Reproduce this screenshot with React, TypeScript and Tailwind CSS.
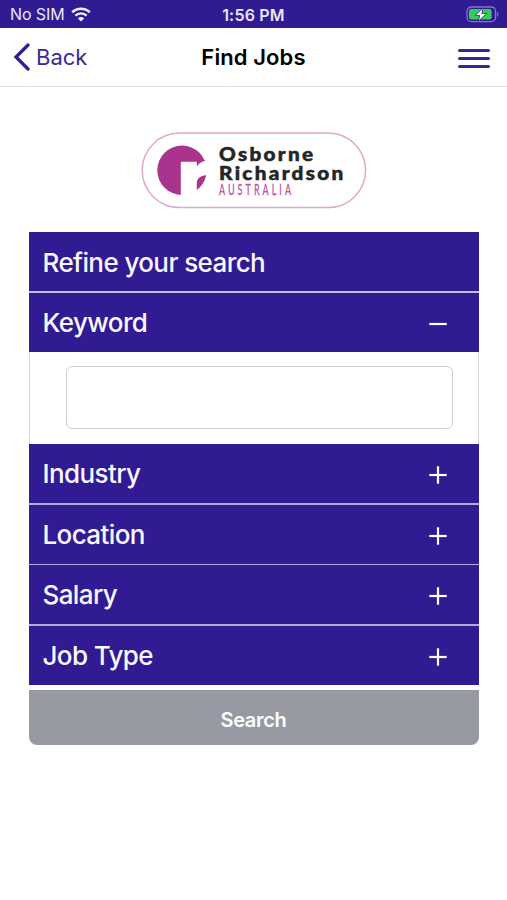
import React, { useState } from "react";

type TFilter = {
  id: string;
  label: string;
};

const filters: TFilter[] = [
  { id: "industry", label: "Industry" },
  { id: "location", label: "Location" },
  { id: "salary", label: "Salary" },
  { id: "jobType", label: "Job Type" },
];

function WifiIcon() {
  return (
    <svg width="20" height="15" viewBox="0 0 20 15" fill="none">
      <path d="M1.2 5.3a12.6 12.6 0 0 1 17.6 0" stroke="#f1effb" strokeWidth="2.6" />
      <path d="M4.4 8.7a8 8 0 0 1 11.2 0" stroke="#f1effb" strokeWidth="2.4" />
      <path d="M10 14.6 6.9 11.4a4.5 4.5 0 0 1 6.2 0z" fill="#f1effb" />
    </svg>
  );
}

function BatteryIcon() {
  return (
    <svg width="33" height="17" viewBox="0 0 33 17" fill="none">
      <rect x="1" y="1" width="28.6" height="14.6" rx="4.4" stroke="#8578c4" strokeWidth="1.3" />
      <path d="M31.2 6c1.6.6 1.6 4 0 4.6z" fill="#8578c4" />
      <rect x="3" y="3" width="22.6" height="10.6" rx="2.4" fill="#35cb5b" />
      <path
        d="M17.4 1.6 9.2 9.4h4.6l-1.6 6 8.4-8h-4.8z"
        fill="#fff"
        stroke="#2f1b92"
        strokeWidth=".8"
      />
    </svg>
  );
}

function Logo() {
  return (
    <svg width="226" height="78" viewBox="0 0 226 78" fill="none">
      <rect x="1.2" y="2" width="223.4" height="74.6" rx="37.3" stroke="#dfa9cd" strokeWidth="1.5" />
      <circle cx="41" cy="39.3" r="24.7" fill="#a9338d" />
      <path
        d="M39.8 30.7H55.8V35.5C58 32 62 30 67 29.6H70V44.3H65C59.5 44.6 56 47.5 55.8 52V66H39.8Z"
        fill="#fff"
      />
      <g
        fontFamily="Lato, sans-serif"
        fontWeight="900"
        fontSize="18.5"
        fill="#252525"
        stroke="#252525"
        strokeWidth=".5"
      >
        <text transform="translate(78 29.7) scale(1.12 1)" textLength="84">
          Osborne
        </text>
        <text transform="translate(78 48.6) scale(1.12 1)" textLength="111">
          Richardson
        </text>
      </g>
      <text
        transform="translate(78 64.2) scale(.6 1)"
        textLength="120"
        fontFamily="Lato, sans-serif"
        fontSize="15"
        fill="#c04fa8"
        stroke="#c04fa8"
        strokeWidth=".3"
      >
        AUSTRALIA
      </text>
    </svg>
  );
}

function ToggleIcon({ open }: { open: boolean }) {
  return (
    <svg
      className="mt-[3px]"
      width="18"
      height="18"
      viewBox="0 0 18 18"
      stroke="#fff"
      strokeWidth="2.2"
    >
      <path d="M0.3 9h17.4" />
      {!open && <path d="M9 0.3v17.4" />}
    </svg>
  );
}

type TFilterRowProps = {
  label: string;
  open: boolean;
  onToggle: () => void;
};

function FilterRow({ label, open, onToggle }: TFilterRowProps) {
  return (
    <button
      className="flex h-[59px] w-full items-center justify-between bg-[#301b92] pr-8 pl-3.5 text-left text-[26px] font-medium tracking-[-0.6px] text-[#f8f7fd]"
      aria-expanded={open}
      onClick={onToggle}
    >
      <span>{label}</span>
      <ToggleIcon open={open} />
    </button>
  );
}

export default function App() {
  const [keywordOpen, setKeywordOpen] = useState<boolean>(true);
  const [keyword, setKeyword] = useState<string>("");
  const [selected, setSelected] = useState<string | null>(null);

  return (
    <div className="min-h-screen bg-white font-[Inter,sans-serif]">
      {/* status bar */}
      <div className="grid h-7 grid-cols-3 items-center bg-[#301b92] px-2 text-[#e9e6f7]">
        <div className="flex items-center gap-1.5 pl-0.5 text-base tracking-[-0.1px]">
          <span>No SIM</span>
          <WifiIcon />
        </div>
        <span className="pt-0.5 text-center text-base font-semibold tracking-[0.2px]">1:56 PM</span>
        <div className="flex justify-end">
          <BatteryIcon />
        </div>
      </div>

      {/* navigation */}
      <header className="grid h-[59px] grid-cols-3 items-center border-b border-[#e2e2e4] pr-4 pl-3">
        <button className="flex items-center gap-1.5 text-[22px] text-[#3a2899]">
          <svg width="18" height="28" viewBox="0 0 18 28" fill="none">
            <path d="M16 2 4 14l12 12" stroke="#301b92" strokeWidth="3.2" strokeLinecap="round" />
          </svg>
          <span>Back</span>
        </button>
        <h1 className="pl-1 text-center text-[22px] font-semibold tracking-[0.1px] whitespace-nowrap text-black">
          Find Jobs
        </h1>
        <button className="flex flex-col items-end gap-[5px] pt-0.5 pr-px" aria-label="menu">
          <span className="h-[3px] w-8 rounded-full bg-[#3a2796]" />
          <span className="h-[3px] w-8 rounded-full bg-[#3a2796]" />
          <span className="h-[3px] w-8 rounded-full bg-[#3a2796]" />
        </button>
      </header>

      <main className="flex flex-col items-center pt-11">
        <Logo />

        <section className="mt-[23px] w-[450px]">
          <div className="flex flex-col gap-[2px] bg-[#c4bde6]">
            <h2 className="flex h-[59px] items-center bg-[#301b92] pt-px pl-3.5 text-[26px] font-medium tracking-[-0.6px] text-[#f8f7fd]">
              Refine your search
            </h2>
            <FilterRow
              label="Keyword"
              open={keywordOpen}
              onToggle={() => setKeywordOpen(!keywordOpen)}
            />
          </div>
          {keywordOpen && (
            <div className="h-[92px] border-x border-[#d8d8d8] pt-3.5 pr-[25px] pl-9">
              <input
                className="h-[63px] w-full rounded-md border-[1.5px] border-[#cfcfcf] px-4 text-2xl outline-none"
                aria-label="Keyword"
                value={keyword}
                onChange={(e) => setKeyword(e.target.value)}
              />
            </div>
          )}
          <div className="flex flex-col gap-[1.67px] bg-[#b3abdc]">
            {filters.map((filter) => (
              <FilterRow
                key={filter.id}
                label={filter.label}
                open={selected === filter.id}
                onToggle={() => setSelected(selected === filter.id ? null : filter.id)}
              />
            ))}
          </div>
          <button className="mt-[5px] h-[55px] w-full rounded-b-lg bg-[#979aa2] pt-[5px] text-xl font-semibold tracking-[-0.3px] text-white">
            Search
          </button>
        </section>
      </main>
    </div>
  );
}
